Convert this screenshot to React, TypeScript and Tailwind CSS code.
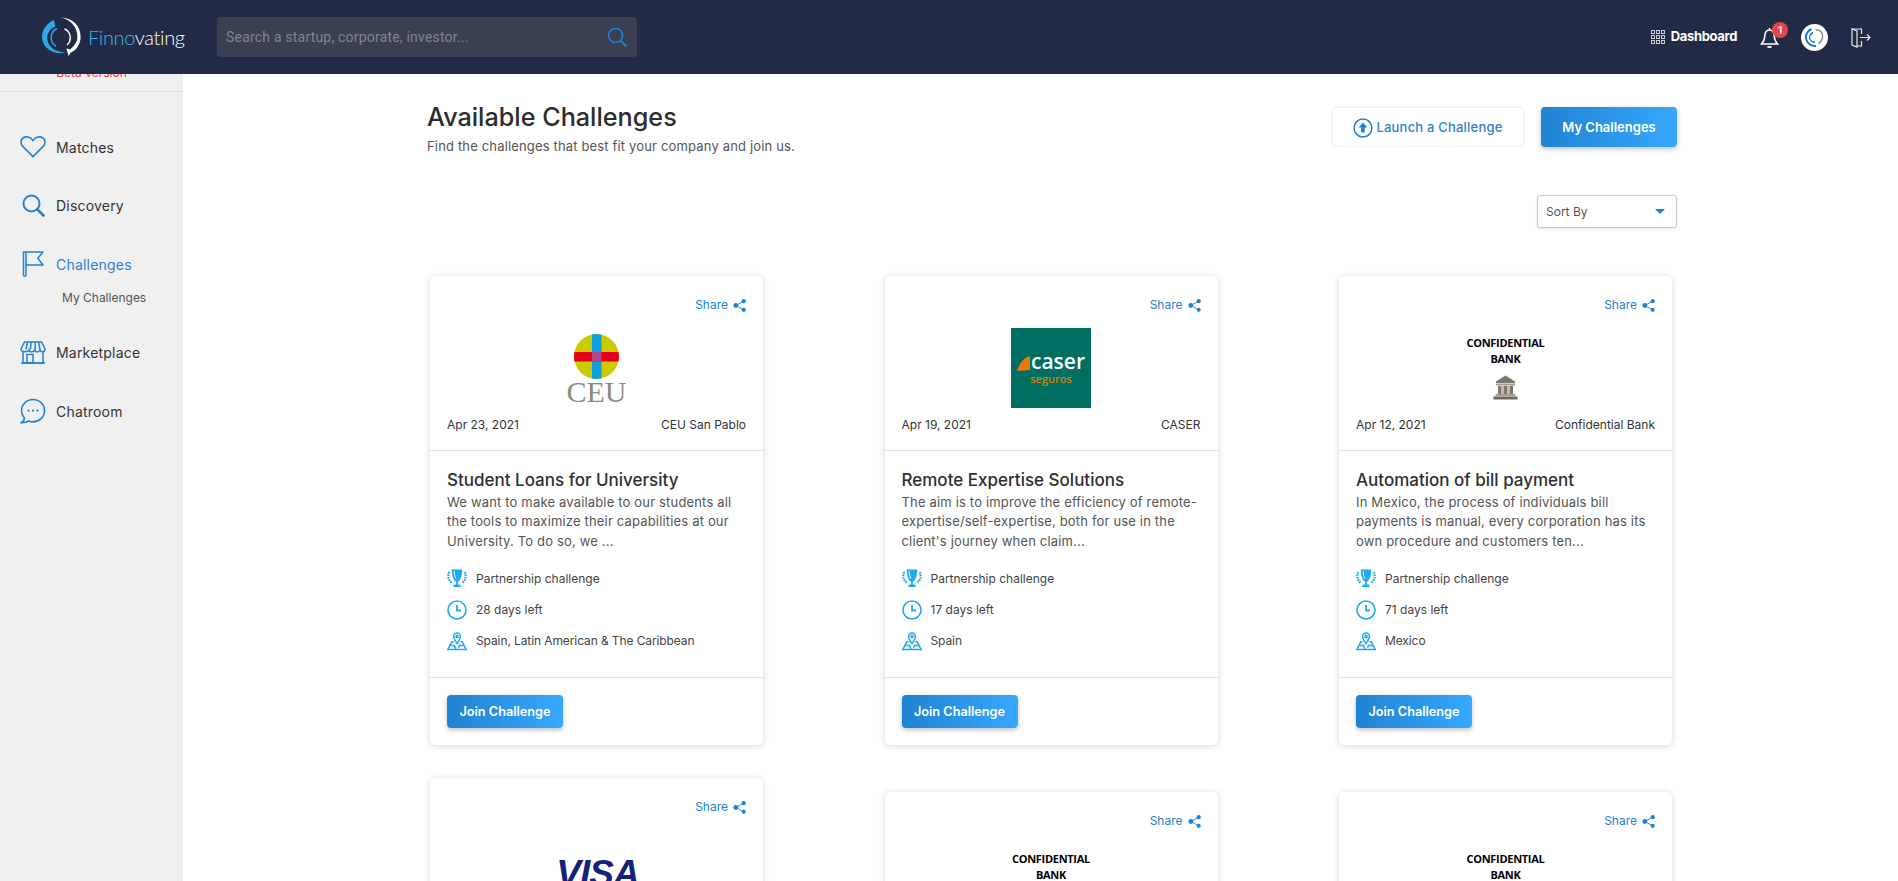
import React from "react";

const F = "font-['Inter','Liberation_Sans',sans-serif]";

function Share() {
  return (
    <div className="flex justify-end items-center gap-[5px] text-[12px] leading-4 text-[#2183d0]">
      <span>Share</span>
      <svg width="13" height="13" viewBox="0 0 13 13" fill="#2183d0" stroke="#2183d0">
        <path d="M3 6.5 L10.5 2.2 M3 6.5 L10.5 10.8" strokeWidth="0.9" />
        <circle cx="2.8" cy="6.5" r="2.4" stroke="none" />
        <circle cx="10.7" cy="2.2" r="2.1" stroke="none" />
        <circle cx="10.7" cy="10.8" r="2.1" stroke="none" />
      </svg>
    </div>
  );
}

function Trophy() {
  return (
    <svg width="20" height="20" viewBox="0 0 20 20" fill="#1eaaf1">
      <path d="M4.8 0.5 H15.2 C15.2 6 14 11 10.9 12.8 V15.4 H13 L14 18 H6 L7 15.4 H9.1 V12.8 C6 11 4.8 6 4.8 0.5 Z" />
      <path d="M7 2 C7.2 5 7.8 7.5 8.8 9.6" stroke="#fff" strokeWidth="0.9" fill="none" />
      <g stroke="#1eaaf1" strokeWidth="2.2" strokeDasharray="1.7 0.8" fill="none">
        <path d="M2.2 3 C0.6 6.5 1 11 5 14" />
        <path d="M17.8 3 C19.4 6.5 19 11 15 14" />
      </g>
    </svg>
  );
}

function Clock() {
  return (
    <svg width="20" height="20" viewBox="0 0 20 20" fill="none" stroke="#1eaaf1" strokeWidth="1.6">
      <circle cx="10" cy="10" r="9" />
      <path d="M10 5 V10.5 H14" strokeWidth="1.8" />
    </svg>
  );
}

function MapPin() {
  return (
    <svg width="20" height="20" viewBox="0 0 20 20" fill="none" stroke="#1eaaf1" strokeWidth="1.5">
      <path d="M10 12.6 C8 9.6 6.6 7.8 6.6 5.4 A3.4 3.4 0 0 1 13.4 5.4 C13.4 7.8 12 9.6 10 12.6 Z" />
      <circle cx="10" cy="5.4" r="1.1" />
      <path d="M6.6 10.8 H4.8 L0.8 18.6 H19.2 L15.2 10.8 H13.4" />
      <path d="M3.5 14.6 H7.5 L9 18.6 M16.5 14.6 H12.5 L11.5 16.8" />
    </svg>
  );
}

function CeuLogo() {
  return (
    <div className="w-[80px] h-[80px] flex flex-col items-center pt-[6px]">
      <svg width="45" height="45" viewBox="0 0 45 45">
        <defs>
          <clipPath id="ceu"><circle cx="22.5" cy="22.5" r="22.5" /></clipPath>
        </defs>
        <g clipPath="url(#ceu)">
          <rect width="45" height="45" fill="#cdcb00" />
          <rect x="18" width="9.5" height="45" fill="#0f9fdc" />
          <rect y="18" width="45" height="9.5" fill="#e2001a" />
          <rect x="18" y="18" width="9.5" height="9.5" fill="#b0488a" />
        </g>
      </svg>
      <span className="font-['Liberation_Serif',serif] text-[30px] leading-[22px] mt-[2px] text-[#8b8b7c]">CEU</span>
    </div>
  );
}

function CaserLogo() {
  return (
    <div className="w-[80px] h-[80px] bg-[#006f62] flex flex-col items-center pt-[24px]">
      <div className="flex items-end">
        <svg width="13" height="15" viewBox="0 0 13 15"><path d="M13 0 L13 14 L0 15 C2 8 6 2 13 0 Z" fill="#e87a0c" /></svg>
        <span className="font-['Open_Sans',sans-serif] font-semibold text-[21px] leading-[19px] text-white ml-[1px]">caser</span>
      </div>
      <span className="font-['Open_Sans',sans-serif] font-semibold text-[11px] leading-[13px] mt-[1px] text-[#d0840f]">seguros</span>
    </div>
  );
}

function BankLogo() {
  return (
    <div className="w-[80px] h-[80px] flex flex-col items-center pt-[7px]">
      <span className="font-['Open_Sans',sans-serif] font-bold text-[11px] leading-[16px] tracking-[-0.3px] text-black text-center">
        CONFIDENTIAL
        <br />
        BANK
      </span>
      <svg className="mt-[8px]" width="25" height="25" viewBox="0 0 25 25" fill="#7d766c">
        <path d="M12.5 0.5 L22 6.5 V8 H3 V6.5 Z" />
        <rect x="3" y="8.5" width="19" height="2" fill="#a39b8f" />
        <rect x="5" y="11" width="3" height="8" />
        <rect x="11" y="11" width="3" height="8" />
        <rect x="17" y="11" width="3" height="8" />
        <rect x="8" y="11" width="3" height="8" fill="#c2bcb2" />
        <rect x="14" y="11" width="3" height="8" fill="#c2bcb2" />
        <rect x="2.5" y="19" width="20" height="2" fill="#a39b8f" />
        <rect x="0.5" y="21.5" width="24" height="3" fill="#6e675e" />
      </svg>
    </div>
  );
}

function VisaLogo() {
  return (
    <div className="w-[80px] h-[80px] flex justify-center pt-[26px] pl-[2px]">
      <span className="font-['Liberation_Sans',sans-serif] font-bold italic text-[37px] leading-[36px] tracking-[-1px] text-[#15217a]">VISA</span>
    </div>
  );
}

function CardTop({ logo, date, org }: { logo: React.ReactNode; date?: string; org?: string }) {
  return (
    <div className="px-[17px] pt-[21px] pb-[17px] border-b border-[#e2e2e2]">
      <Share />
      <div className="flex justify-center mt-[15px]">{logo}</div>
      <div className="flex justify-between mt-[9px] text-[12px] leading-4 text-[#333]">
        <span>{date}</span>
        <span>{org}</span>
      </div>
    </div>
  );
}

function Card({ logo, date, org, title, desc, days, place }: {
  logo: React.ReactNode; date: string; org: string; title: string; desc: string[]; days: string; place: string;
}) {
  return (
    <div className="w-[333px] bg-white rounded-[5px] shadow-[0_1px_7px_rgba(0,0,0,0.17)]">
      <CardTop logo={logo} date={date} org={org} />
      <div className="px-[17px] pt-[17px] pb-[26px] border-b border-[#e2e2e2]">
        <h3 className="text-[17px] leading-6 font-medium text-[#2f2f2f]">{title}</h3>
        <p className="mt-[1px] text-[13px] leading-[19.4px] text-[#555] tracking-[0.17px] whitespace-nowrap">
          {desc.map((d) => (
            <span key={d} className="block">{d}</span>
          ))}
        </p>
        <div className="mt-[18px] flex flex-col gap-[11px] text-[12px] text-[#444]">
          <div className="flex items-center gap-[9px] h-[20px]">
            <Trophy />
            <span>Partnership challenge</span>
          </div>
          <div className="flex items-center gap-[9px] h-[20px]">
            <Clock />
            <span>{days}</span>
          </div>
          <div className="flex items-center gap-[9px] h-[20px]">
            <MapPin />
            <span className="tracking-[-0.1px]">{place}</span>
          </div>
        </div>
      </div>
      <div className="px-[17px] py-[17px]">
        <button className="w-[116px] h-[33px] rounded-[4px] text-white text-[12.7px] font-semibold bg-gradient-to-r from-[#2183d0] to-[#36a8ff] shadow-[0_2px_5px_rgba(0,0,0,0.25)]">
          Join Challenge
        </button>
      </div>
    </div>
  );
}

function PartialCard({ logo }: { logo: React.ReactNode }) {
  return (
    <div className="w-[333px] bg-white rounded-[5px] shadow-[0_1px_7px_rgba(0,0,0,0.17)]">
      <CardTop logo={logo} />
    </div>
  );
}

function NavRow({ icon, label, active, className }: { icon: React.ReactNode; label: string; active?: boolean; className: string }) {
  return (
    <div className={`flex items-center h-[26px] pl-[20px] gap-[10px] text-[14px] tracking-[0.2px] ${active ? "text-[#2f7fd6]" : "text-[#333]"} ${className}`}>
      <span className="w-[26px] h-[26px] flex items-center justify-center">{icon}</span>
      <span>{label}</span>
    </div>
  );
}

function FinnoMark() {
  return (
    <svg width="40" height="40" viewBox="0 0 40 40" fill="none">
      <path d="M13 3 L14.5 9.5 C8.5 12 5.5 17 6.3 22.5 C7.5 30 14 35 25 35.6 C14 38.6 2 32 1 21 C0.5 13 6 6 13 3 Z" fill="#2fa8e4" />
      <path d="M20 0.6 C32 1 39.6 9 39.6 20 C39.6 27 35.6 33 29.6 35.8 L27.6 39 L25.4 31.6 L29 32.6 C34 28.6 36.6 24 36.4 19 C36 10 30 3 20 0.6 Z" fill="#fff" />
      <path d="M16 11.5 C10.5 13.5 9 20 11 25 C12 27 13.4 28.4 15 29.2" stroke="#2fa8e4" strokeWidth="1.5" />
      <path d="M23.5 12 C29.5 14 31.5 23 26 28" stroke="#fff" strokeWidth="1.4" />
    </svg>
  );
}

export default function App() {
  const blue = "#2183d0";
  return (
    <div className={`h-screen w-full overflow-hidden flex flex-col bg-white ${F}`}>
      <header className="relative z-10 h-[74px] shrink-0 bg-[#222b45] flex items-center pl-[41px] pr-[27px]">
        <FinnoMark />
        <span className="font-['Lato',sans-serif] font-light text-[20px] ml-[7px] w-[129px] tracking-[-0.35px]">
          <span className="text-[#3fb4ec]">Finno</span>
          <span className="text-white">vating</span>
        </span>
        <div className="w-[420px] h-[40px] rounded-[4px] bg-[#3a4052] flex items-center justify-between pl-[9px] pr-[9px]">
          <span className="text-[14px] text-[#81858f] font-['Roboto',sans-serif] tracking-[0.2px]">Search a startup, corporate, investor...</span>
          <svg width="21" height="21" viewBox="0 0 21 21" fill="none" stroke="#2183d0" strokeWidth="1.6">
            <circle cx="8.5" cy="8.5" r="7" />
            <path d="M13.6 13.6 L19.5 19.5" strokeWidth="2" />
          </svg>
        </div>
        <div className="ml-auto flex items-center">
          <svg width="14" height="14" viewBox="0 0 14 14" fill="none" stroke="#c9ccd3" strokeWidth="1">
            {[0.5, 5.5, 10.5].map((x) =>
              [0.5, 5.5, 10.5].map((y) => <rect key={`${x}-${y}`} x={x} y={y} width="3" height="3" />)
            )}
          </svg>
          <span className="ml-[6px] text-[13px] font-bold tracking-[-0.35px] text-white">Dashboard</span>
          <div className="relative ml-[23px] w-[20px] h-[22px]">
            <svg width="20" height="22" viewBox="0 0 20 22" fill="none" stroke="#fff" strokeWidth="1.5">
              <path d="M1.5 18 C3.5 16 4.5 14 4.8 10 C5 6.5 6.5 4 9.5 4 C12.5 4 14 6.5 14.2 10 C14.5 14 15.5 16 17.5 18 Z" />
              <path d="M7.5 21 H11.5" strokeWidth="1.8" />
              <path d="M9.5 2 V4" />
            </svg>
            <span className="absolute -top-[4px] left-[12px] w-[16px] h-[16px] rounded-full bg-[#e5444a] text-white text-[10px] font-semibold flex items-center justify-center">1</span>
          </div>
          <div className="ml-[21px] w-[27px] h-[27px] rounded-full bg-white flex items-center justify-center">
            <svg width="20" height="20" viewBox="0 0 40 40" fill="none">
              <path d="M13 4 C4 8 0 17 2.5 25 C5 33 13 38.5 22 38" stroke="#1f78c8" strokeWidth="4" />
              <path d="M21 5 C31 5 36 12 35 21 C34 27 31 31 27 33" stroke="#7f8a99" strokeWidth="3" />
              <path d="M16 11 C10 14 8 20 10 25 C12 29 16 31 20 30" stroke="#1f78c8" strokeWidth="3" />
            </svg>
          </div>
          <svg className="ml-[23px]" width="20" height="21" viewBox="0 0 20 21" fill="none" stroke="#e8e9ec" strokeWidth="1.2">
            <path d="M1 2 H10.5 V7 M10.5 14 V19 H6" />
            <path d="M1 2 L6 4 V20 L1 18 Z" />
            <path d="M9 10.5 H19 M16 7.5 L19 10.5 L16 13.5" />
          </svg>
        </div>
      </header>

      <div className="flex flex-1 min-h-0">
        <aside className="w-[183px] shrink-0 bg-[#f0f0f0]">
          <div className="-mt-[9px] pb-[10px] border-b border-[#dfdfdf] text-center text-[12px] leading-4 text-[#e8403f]">
            Beta version
          </div>
          <NavRow
            className="mt-[42px]"
            label="Matches"
            icon={
              <svg width="26" height="22" viewBox="0 0 26 22" fill="none" stroke={blue} strokeWidth="1.6">
                <path d="M13 20.6 L2.8 10.4 C0.2 7.6 0.6 3.8 3 2 C5.8 0 10.4 0.6 13 4.6 C15.6 0.6 20.2 0 23 2 C25.4 3.8 25.8 7.6 23.2 10.4 Z" />
              </svg>
            }
          />
          <NavRow
            className="mt-[32px]"
            label="Discovery"
            icon={
              <svg width="23" height="23" viewBox="0 0 23 23" fill="none" stroke={blue} strokeWidth="2">
                <circle cx="9.5" cy="9.5" r="8" />
                <path d="M15.3 15.3 L21.5 21.5" strokeWidth="2.6" strokeLinecap="round" />
              </svg>
            }
          />
          <NavRow
            className="mt-[33px]"
            label="Challenges"
            active
            icon={
              <svg width="22" height="26" viewBox="0 0 22 26" fill="none" stroke={blue} strokeWidth="1.5" strokeLinejoin="round">
                <path d="M1.5 1 H21 L15.8 7.2 L21 14 H4 V24 A1.2 1.2 0 0 1 1.5 24 Z" />
                <path d="M4 1 V14" />
              </svg>
            }
          />
          <div className="mt-[13px] pl-[62px] text-[12px] leading-4 text-[#555]">My Challenges</div>
          <NavRow
            className="mt-[33px]"
            label="Marketplace"
            icon={
              <svg width="26" height="23" viewBox="0 0 26 23" fill="none" stroke={blue} strokeWidth="1.5">
                <path d="M4.5 1 H21.5 L25 8 C25 11.5 20.8 11.5 20 9 C19 11.5 15 11.5 14.5 9 C13.5 11.5 9.5 11.5 9 9 C8 11.5 1 11.5 1 8 Z" />
                <path d="M7.5 1 L6 8.5 M11 1 L10.5 8.5 M15 1 L15.5 8.5 M18.5 1 L20 8.5" />
                <path d="M3 11 V22 H23 V11" />
                <rect x="7" y="13.5" width="6" height="8.5" />
                <path d="M1 22 H25" />
              </svg>
            }
          />
          <NavRow
            className="mt-[33px]"
            label="Chatroom"
            icon={
              <svg width="26" height="26" viewBox="0 0 26 26" fill="none" stroke={blue} strokeWidth="1.6">
                <path d="M13 1.5 C6.5 1.5 1.5 6.5 1.5 12.7 C1.5 15.6 2.6 18 4.4 20 C4.4 22 3.2 23.6 1.2 24.6 C4.5 24.8 7 24 8.6 23 C10 23.6 11.4 23.9 13 23.9 C19.5 23.9 24.5 19 24.5 12.7 C24.5 6.5 19.5 1.5 13 1.5 Z" />
                <g fill={blue} stroke="none">
                  <circle cx="8.5" cy="12.7" r="1.1" />
                  <circle cx="13" cy="12.7" r="1.1" />
                  <circle cx="17.5" cy="12.7" r="1.1" />
                </g>
              </svg>
            }
          />
        </aside>

        <main className="flex-1 min-w-0 pl-[244px] pr-[221px]">
          <div className="flex justify-between pt-[33px]">
            <div className="-mt-[5px] -mb-[9px]">
              <h1 className="text-[25.2px] leading-[30px] font-medium text-[#2d2d2d]">Available Challenges</h1>
              <p className="text-[13px] leading-[19px] mt-[5px] tracking-[0.16px] text-[#555]">
                Find the challenges that best fit your company and join us.
              </p>
            </div>
            <div className="flex gap-[17px]">
              <button className="w-[192px] h-[40px] pt-[2px] rounded-[4px] bg-white border border-[#eeeff2] flex items-center justify-center gap-[3px] text-[13px] font-medium tracking-[0.2px] text-[#2f7fd0]">
                <svg width="20" height="20" viewBox="0 0 20 20" fill="none" stroke="#2183d0" strokeWidth="1.5">
                  <circle cx="10" cy="10" r="9" />
                  <path d="M10 4.6 L14.4 9.6 H11.8 V14.6 H8.2 V9.6 H5.6 Z" fill="#2183d0" stroke="none" />
                </svg>
                Launch a Challenge
              </button>
              <button className="w-[136px] h-[40px] pt-[2px] rounded-[4px] text-white text-[13px] font-semibold bg-gradient-to-r from-[#2183d0] to-[#36a8ff] shadow-[0_2px_5px_rgba(0,0,0,0.25)]">
                My Challenges
              </button>
            </div>
          </div>

          <div className="flex justify-end mt-[48px]">
            <div className="w-[140px] h-[33px] rounded-[3px] border border-[#c9c9c9] shadow-[0_1px_3px_rgba(0,0,0,0.1)] flex items-center justify-between pl-[8px] pr-[11px] text-[12px] text-[#555]">
              <span>Sort By</span>
              <span className="w-0 h-0 border-l-[5px] border-r-[5px] border-t-[5px] border-l-transparent border-r-transparent border-t-[#2183d0]" />
            </div>
          </div>

          <div className="flex gap-[121.5px] pl-[3px] mt-[48px]">
            <div className="flex flex-col gap-[33px] shrink-0">
              <Card
                logo={<CeuLogo />}
                date="Apr 23, 2021"
                org="CEU San Pablo"
                title="Student Loans for University"
                desc={[
                  "We want to make available to our students all",
                  "the tools to maximize their capabilities at our",
                  "University. To do so, we ...",
                ]}
                days="28 days left"
                place="Spain, Latin American & The Caribbean"
              />
              <PartialCard logo={<VisaLogo />} />
            </div>
            <div className="flex flex-col gap-[47px] shrink-0">
              <Card
                logo={<CaserLogo />}
                date="Apr 19, 2021"
                org="CASER"
                title="Remote Expertise Solutions"
                desc={[
                  "The aim is to improve the efficiency of remote-",
                  "expertise/self-expertise, both for use in the",
                  "client's journey when claim...",
                ]}
                days="17 days left"
                place="Spain"
              />
              <PartialCard logo={<BankLogo />} />
            </div>
            <div className="flex flex-col gap-[47px] shrink-0">
              <Card
                logo={<BankLogo />}
                date="Apr 12, 2021"
                org="Confidential Bank"
                title="Automation of bill payment"
                desc={[
                  "In Mexico, the process of individuals bill",
                  "payments is manual, every corporation has its",
                  "own procedure and customers ten...",
                ]}
                days="71 days left"
                place="Mexico"
              />
              <PartialCard logo={<BankLogo />} />
            </div>
          </div>
        </main>
      </div>
    </div>
  );
}
